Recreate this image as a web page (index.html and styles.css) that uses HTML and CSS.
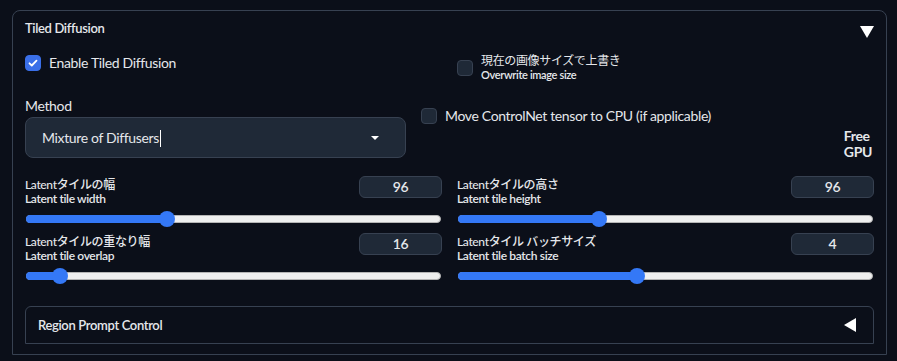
FILE: index.html
```html
<!DOCTYPE html>
<html lang="ja">
<head>
  <meta charset="UTF-8">
  <meta name="viewport" content="width=device-width, initial-scale=1.0">
  <title>Tiled Diffusion</title>
  <link rel="stylesheet" href="styles.css">
</head>
<body>
  <div class="panel">
    <!-- Accordion header -->
    <div class="panel-head">
      <span class="panel-title">Tiled Diffusion</span>
      <span class="arrow-down"></span>
    </div>

    <!-- Top checkboxes -->
    <div class="row-top">
      <label class="check check-big">
        <span class="box checked">
          <svg viewBox="0 0 16 16" width="16" height="16"><path d="M4.5 8.3l2.3 2.2 4.7-4.8" fill="none" stroke="#fff" stroke-width="1.8" stroke-linecap="round" stroke-linejoin="round"/></svg>
        </span>
        <span>Enable Tiled Diffusion</span>
      </label>
      <label class="check check-small">
        <span class="box"></span>
        <span class="two-line">
          <span class="jp">現在の画像サイズで上書き</span>
          <span class="en">Overwrite image size</span>
        </span>
      </label>
    </div>

    <!-- Method + options -->
    <div class="row-method">
      <div class="method">
        <div class="field-label">Method</div>
        <div class="select">
          <span class="select-text">Mixture of Diffusers<span class="caret"></span></span>
          <span class="select-arrow"></span>
        </div>
      </div>
      <div class="options">
        <label class="check check-big">
          <span class="box"></span>
          <span>Move ControlNet tensor to CPU (if applicable)</span>
        </label>
        <div class="free-gpu">Free<br>GPU</div>
      </div>
    </div>

    <!-- Sliders -->
    <div class="sliders">
      <div class="slider">
        <div class="slider-head">
          <div class="two-line">
            <span class="jp">Latentタイルの幅</span>
            <span class="en">Latent tile width</span>
          </div>
          <div class="num">96</div>
        </div>
        <div class="track">
          <div class="fill" style="width: calc((100% - 16px) * 0.333 + 8px)"></div>
          <div class="thumb" style="left: calc((100% - 16px) * 0.333)"></div>
        </div>
      </div>
      <div class="slider">
        <div class="slider-head">
          <div class="two-line">
            <span class="jp">Latentタイルの高さ</span>
            <span class="en">Latent tile height</span>
          </div>
          <div class="num">96</div>
        </div>
        <div class="track">
          <div class="fill" style="width: calc((100% - 16px) * 0.333 + 8px)"></div>
          <div class="thumb" style="left: calc((100% - 16px) * 0.333)"></div>
        </div>
      </div>
      <div class="slider">
        <div class="slider-head">
          <div class="two-line">
            <span class="jp">Latentタイルの重なり幅</span>
            <span class="en">Latent tile overlap</span>
          </div>
          <div class="num">16</div>
        </div>
        <div class="track">
          <div class="fill" style="width: calc((100% - 16px) * 0.0625 + 8px)"></div>
          <div class="thumb" style="left: calc((100% - 16px) * 0.0625)"></div>
        </div>
      </div>
      <div class="slider">
        <div class="slider-head">
          <div class="two-line">
            <span class="jp">Latentタイル バッチサイズ</span>
            <span class="en">Latent tile batch size</span>
          </div>
          <div class="num">4</div>
        </div>
        <div class="track">
          <div class="fill" style="width: calc((100% - 16px) * 0.4286 + 8px)"></div>
          <div class="thumb" style="left: calc((100% - 16px) * 0.4286)"></div>
        </div>
      </div>
    </div>

    <!-- Nested accordion -->
    <div class="sub-panel">
      <span class="sub-title">Region Prompt Control</span>
      <span class="arrow-left"></span>
    </div>
  </div>
</body>
</html>
```

FILE: styles.css
```css
* {
  margin: 0;
  padding: 0;
  box-sizing: border-box;
}

body {
  font-family: "Source Sans Pro", Lato, "Noto Sans CJK JP", sans-serif;
  background-color: #0b0f19;
  color: #e5e7eb;
  letter-spacing: -0.35px;
  padding: 10px 10px 0 12px;
}

.panel {
  width: 875px;
  height: 345px;
  border: 1px solid #374151;
  border-radius: 8px 8px 0 0;
  padding: 7px 12px 10px 12px;
  display: flex;
  flex-direction: column;
}

.panel-head {
  display: flex;
  justify-content: space-between;
  height: 20px;
}

.panel-title {
  font-size: 13px;
  font-weight: 600;
  line-height: 20px;
}

.arrow-down {
  width: 0;
  height: 0;
  margin-top: 8px;
  border-left: 7px solid transparent;
  border-right: 7px solid transparent;
  border-top: 12px solid #fff;
}

/* checkboxes */
.check {
  display: flex;
  align-items: center;
  gap: 8px;
  cursor: pointer;
}

.box {
  width: 16px;
  height: 16px;
  flex-shrink: 0;
  border-radius: 4px;
  background-color: #1f2937;
  border: 1px solid #374151;
  display: flex;
}

.box.checked {
  background-color: #3a6fe8;
  border-color: #3a6fe8;
}

.box svg {
  margin: -1px;
}

.check-big {
  font-size: 14px;
  line-height: 22px;
}

.two-line {
  display: flex;
  flex-direction: column;
  font-weight: 600;
}

.two-line .jp {
  font-weight: 500;
}

.check-small .two-line .jp {
  font-size: 12px;
  font-weight: 400;
  line-height: 14px;
}

.check-small .two-line .en {
  font-size: 11px;
  line-height: 13px;
}

.row-top {
  display: grid;
  grid-template-columns: 1fr 1fr;
  grid-template-rows: 30px;
  column-gap: 15px;
  margin-top: 10px;
  align-items: start;
}

.row-top .check-big {
  margin-top: 4px;
}

.row-top .check-small {
  margin-top: 6px;
}

/* method row */
.row-method {
  display: flex;
  gap: 15px;
  margin-top: 18px;
  height: 62px;
}

.method {
  width: 381px;
}

.field-label {
  font-size: 14px;
  line-height: 20px;
  margin-bottom: 1px;
}

.select {
  height: 41px;
  border: 1px solid #374151;
  border-radius: 8px;
  background-color: #1f2937;
  display: flex;
  align-items: center;
  justify-content: space-between;
  padding: 0 26px 0 16px;
  font-size: 14px;
}

.caret {
  display: inline-block;
  width: 1px;
  height: 17px;
  margin-left: 1px;
  background-color: #fff;
  vertical-align: -4px;
}

.select-arrow {
  width: 0;
  height: 0;
  border-left: 4px solid transparent;
  border-right: 4px solid transparent;
  border-top: 4px solid #fff;
}

.options {
  flex: 1;
  display: flex;
  flex-direction: column;
  padding-top: 9px;
}

.free-gpu {
  align-self: flex-end;
  text-align: left;
  font-size: 14px;
  font-weight: 700;
  line-height: 16px;
  margin-top: 1px;
  margin-right: 2px;
}

/* sliders */
.sliders {
  display: grid;
  grid-template-columns: 1fr 1fr;
  column-gap: 15px;
  margin-top: 18px;
}

.slider {
  height: 57px;
}

.slider-head {
  display: flex;
  justify-content: space-between;
  height: 39px;
}

.slider-head .two-line {
  font-size: 12px;
  line-height: 14px;
  padding-top: 2px;
}

.num {
  width: 83px;
  height: 22px;
  border: 1px solid #374151;
  border-radius: 6px;
  background-color: #1f2937;
  font-size: 14px;
  font-weight: 600;
  line-height: 20px;
  text-align: center;
}

.track {
  position: relative;
  height: 8px;
  margin: 0 1px;
  border-radius: 4px;
  background-color: #efefef;
  border: 1px solid #b5b5b5;
}

.fill {
  height: 8px;
  margin: -1px;
  border-radius: 4px;
  background-color: #3478f6;
}

.thumb {
  position: absolute;
  top: -5px;
  width: 16px;
  height: 16px;
  border-radius: 50%;
  background-color: #3478f6;
}

/* nested accordion */
.sub-panel {
  margin-top: auto;
  height: 38px;
  border: 1px solid #374151;
  border-radius: 6px 6px 0 0;
  display: flex;
  align-items: center;
  justify-content: space-between;
  padding: 0 17px 0 12px;
}

.sub-title {
  font-size: 13px;
  font-weight: 600;
}

.arrow-left {
  width: 0;
  height: 0;
  border-top: 7px solid transparent;
  border-bottom: 7px solid transparent;
  border-right: 12px solid #fff;
}
```
